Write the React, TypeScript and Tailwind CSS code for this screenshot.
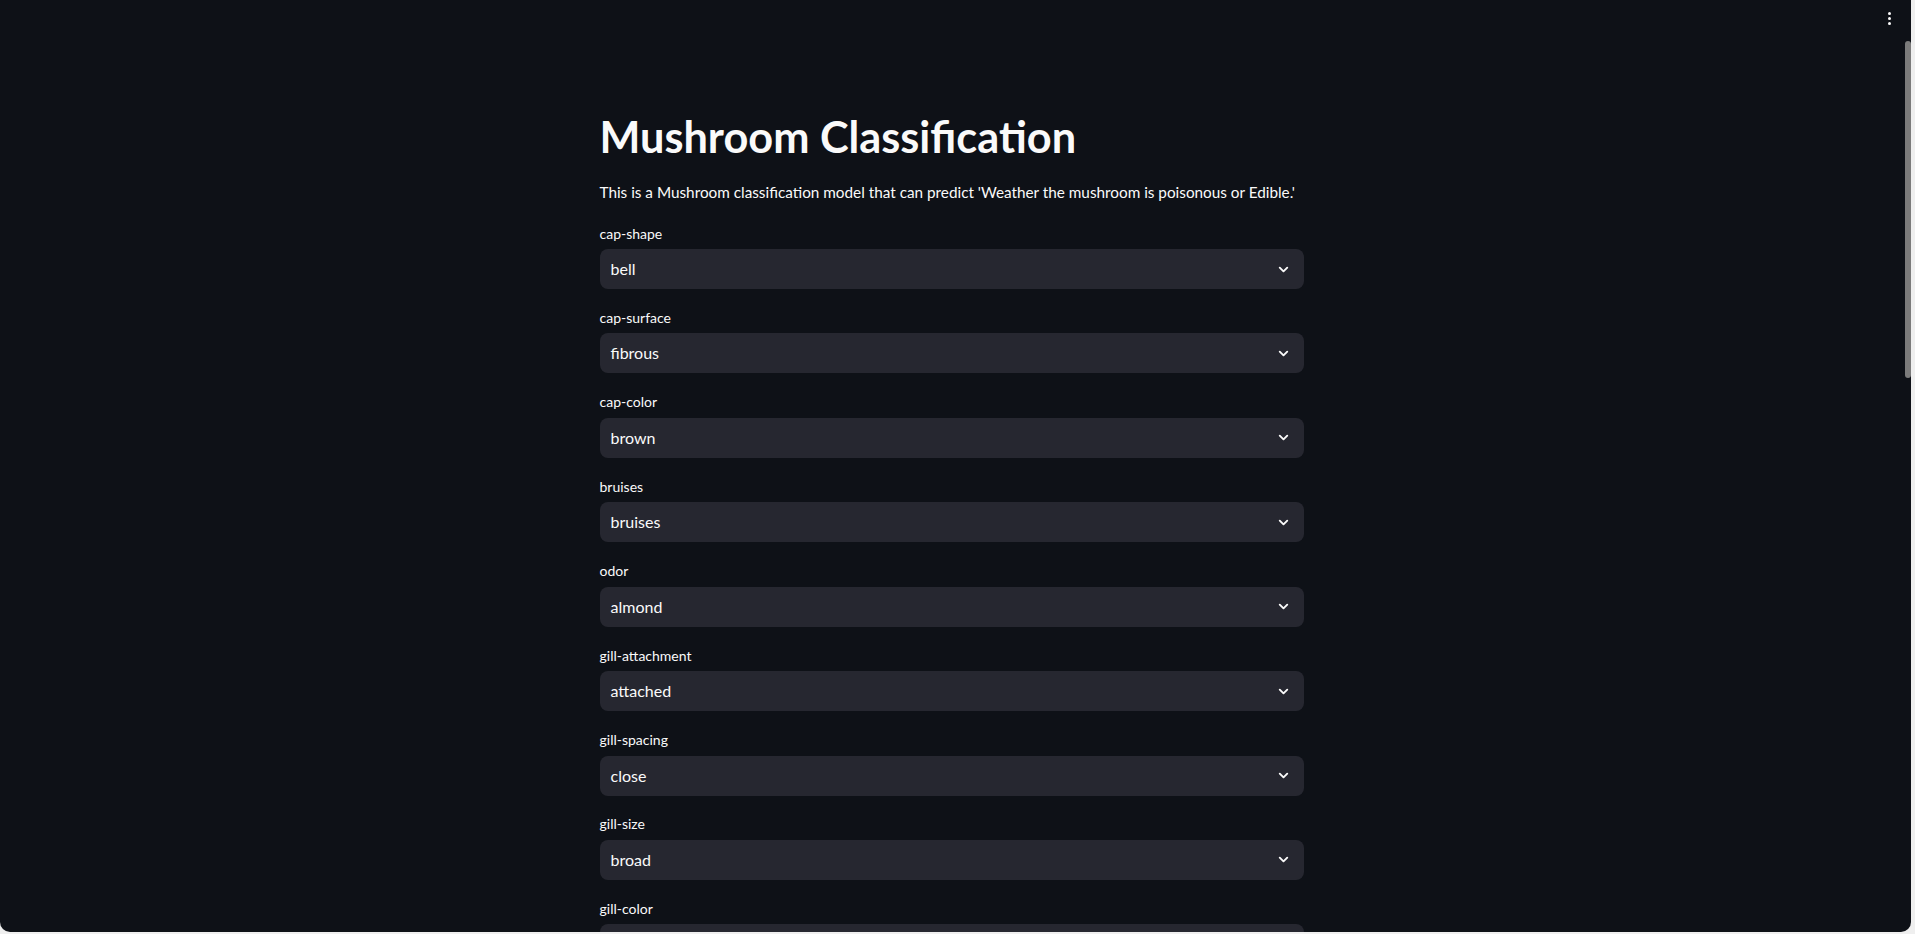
import { ChevronDown } from 'lucide-react';

const fields = [
  { label: 'cap-shape', value: 'bell' },
  { label: 'cap-surface', value: 'fibrous' },
  { label: 'cap-color', value: 'brown' },
  { label: 'bruises', value: 'bruises' },
  { label: 'odor', value: 'almond' },
  { label: 'gill-attachment', value: 'attached' },
  { label: 'gill-spacing', value: 'close' },
  { label: 'gill-size', value: 'broad' },
  { label: 'gill-color', value: 'black' },
];

function SelectBox({ label, value }: { label: string; value: string }) {
  return (
    <div className="flex flex-col">
      <label className="h-6 mb-1 flex items-center text-[14px] text-[#fafafa]">{label}</label>
      <div className="h-10 rounded-lg bg-[#262730] flex items-center justify-between pl-[11px] pr-[13px]">
        <span className="text-[16px] text-[#fafafa]">{value}</span>
        <ChevronDown className="w-[15px] h-[15px] text-[#fafafa]" strokeWidth={3} />
      </div>
    </div>
  );
}

export default function App() {
  return (
    <div
      className="h-[934px] w-full bg-[#efefef] overflow-hidden"
      style={{ fontFamily: 'Lato, "Noto Sans", sans-serif' }}
    >
      <div className="relative h-[932px] w-[1911px] bg-[#0e1117] rounded-b-[10px] overflow-hidden flex">
        {/* main menu */}
        <div className="absolute top-[12px] right-[20px] flex flex-col gap-[2px]">
          <span className="w-[3px] h-[3px] rounded-full bg-[#fafafa]" />
          <span className="w-[3px] h-[3px] rounded-full bg-[#fafafa]" />
          <span className="w-[3px] h-[3px] rounded-full bg-[#fafafa]" />
        </div>

        {/* content */}
        <div className="w-[1903px] flex justify-center">
          <div className="w-[704px] pt-[110px] flex flex-col">
            <h1 className="text-[43.3px] font-bold leading-[53px] text-[#fafafa]">Mushroom Classification</h1>
            <p className="mt-4 text-[15.3px] leading-[26px] whitespace-nowrap text-[#fafafa]">
              This is a Mushroom classification model that can predict 'Weather the mushroom is poisonous or Edible.'
            </p>
            <div className="mt-4 flex flex-col gap-[16.43px]">
              {fields.map((f) => (
                <SelectBox key={f.label} label={f.label} value={f.value} />
              ))}
            </div>
          </div>
        </div>

        {/* scrollbar */}
        <div className="w-2 pl-[2px] pt-[41px]">
          <div className="w-[6px] h-[337px] rounded-full bg-[#7b7b7b]" />
        </div>
      </div>
    </div>
  );
}
